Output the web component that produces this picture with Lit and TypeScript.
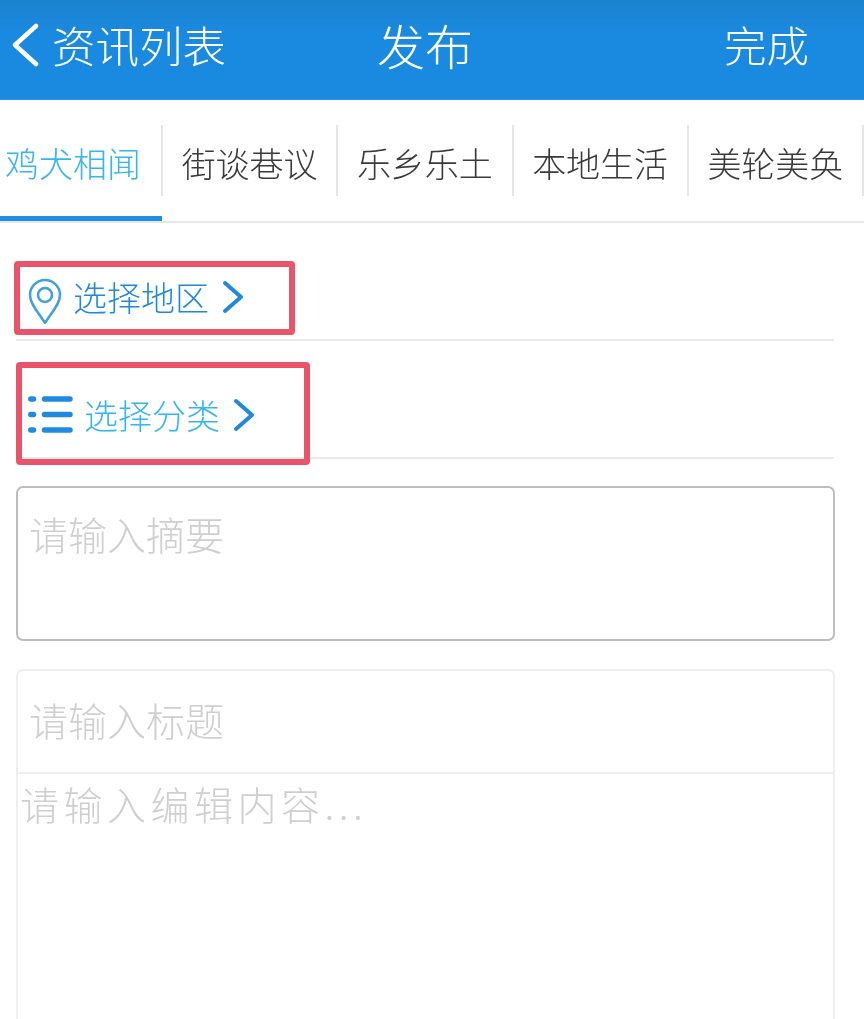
import {html, css, LitElement} from 'lit';
import {customElement} from 'lit/decorators.js';

const tabs = ['鸡犬相闻', '街谈巷议', '乐乡乐土', '本地生活', '美轮美奂'];

const chevron = html`<svg class="chev" viewBox="0 0 22 34" width="22" height="34">
	<path d="M3 3 L19 17 L3 31" fill="none" stroke="#2188dc" stroke-width="4" stroke-linecap="round" stroke-linejoin="round"/>
</svg>`;

@customElement('app-root')
export class AppRoot extends LitElement {
	static styles = css`
		*, *::before, *::after {
			box-sizing: border-box;
		}

		:host {
			display: block;
			width: 864px;
			height: 1019px;
			overflow: hidden;
			background: #fff;
			font-family: "Noto Sans CJK SC", "Liberation Sans", sans-serif;
			font-weight: 300;
			filter: blur(0.4px);
		}

		/* top bar */
		.bar {
			display: grid;
			grid-template-columns: 377px auto 1fr;
			align-items: center;
			height: 100px;
			padding-bottom: 10px;
			color: #fff;
			background: linear-gradient(#1a82cf, #1a8ae0 35%);
			border-bottom: 1px solid #2a92e2;
		}
		.back {
			display: flex;
			align-items: center;
			gap: 12px;
			padding-left: 11px;
			font-size: 43.5px;
			line-height: 1;
		}
		.back svg {
			margin-right: 1px;
		}
		.title {
			font-size: 48px;
			line-height: 1;
			padding-bottom: 2px;
		}
		.done {
			justify-self: end;
			padding-right: 55px;
			font-size: 42.5px;
			line-height: 1;
		}

		/* tabs */
		.tabs {
			display: flex;
			height: 123px;
			padding-top: 25px;
			overflow: hidden;
			border-bottom: 2px solid #e8e8e8;
			position: relative;
		}
		.tab {
			flex: 0 0 175.25px;
			height: 71px;
			padding-top: 4px;
			display: flex;
			align-items: center;
			justify-content: center;
			font-size: 34px;
			color: #3a3a3a;
			border-right: 2px solid #e6e6e6;
		}
		.tab.on {
			flex-basis: 176px;
			margin-left: -13px;
			padding-right: 2px;
			color: #35b5f2;
		}
		.tabs::after {
			content: "";
			position: absolute;
			left: 0;
			bottom: -1px;
			width: 162px;
			height: 6px;
			background: #1f8fe3;
		}

		/* pick rows */
		.row {
			display: flex;
			align-items: center;
			margin-left: 16px;
			width: 818px;
			height: 118px;
			border-bottom: 2px solid #eaeaea;
			position: relative;
			font-size: 34px;
		}
		.area {
			padding: 31px 0 0 12px;
			gap: 11px;
			color: #2188dc;
		}
		.area .pin {
			margin-top: 10px;
		}
		.cat {
			padding: 31px 0 0 12px;
			gap: 11px;
			color: #35b5f2;
		}
		.chev {
			margin-left: 2px;
		}
		.mark {
			position: absolute;
			border: 6px solid #e9546b;
			border-radius: 4px;
		}
		.area .mark {
			left: -2px;
			top: 38px;
			width: 281px;
			height: 74px;
		}
		.cat .mark {
			left: 0;
			top: 21px;
			width: 294px;
			height: 103px;
		}

		/* inputs */
		.summary {
			margin: 27px 0 0 16px;
			width: 819px;
			height: 155px;
			padding: 21px 11px;
			border: 2px solid #bdbdbd;
			border-radius: 7px;
			font-size: 39px;
			line-height: 48px;
			color: #cfcfcf;
		}
		.editor {
			margin: 28px 0 0 16px;
			width: 819px;
			height: 500px;
			border: 2px solid #efefef;
			border-radius: 7px;
			color: #cfcfcf;
			font-size: 39px;
		}
		.head {
			height: 103px;
			padding: 24px 11px 0;
			line-height: 48px;
			border-bottom: 2px solid #efefef;
		}
		.body {
			padding: 5px 2px;
			line-height: 48px;
			letter-spacing: 4.5px;
		}
	`;

	render() {
		return html`
			<div class="bar">
				<div class="back">
					<svg viewBox="0 0 28 44" width="28" height="44">
						<path d="M25 3 L4 22 L25 41" fill="none" stroke="#fff" stroke-width="4.5" stroke-linecap="round" stroke-linejoin="round"/>
					</svg>
					<span>资讯列表</span>
				</div>
				<div class="title">发布</div>
				<div class="done">完成</div>
			</div>
			<div class="tabs">
				${tabs.map((t, i) => html`<div class="tab ${i == 0 ? 'on' : ''}">${t}</div>`)}
			</div>
			<div class="row area">
				<svg class="pin" viewBox="0 0 34 48" width="34" height="48">
					<path d="M17 45 C12 36 2 27 2 17 A15 15 0 0 1 32 17 C32 27 22 36 17 45 Z" fill="none" stroke="#3f9fe4" stroke-width="2.5" stroke-linejoin="round"/>
					<circle cx="17" cy="17" r="7" fill="none" stroke="#3f9fe4" stroke-width="2.5"/>
				</svg>
				<span>选择地区</span>
				${chevron}
				<div class="mark"></div>
			</div>
			<div class="row cat">
				<svg viewBox="0 0 45 37" width="45" height="37">
					<g fill="none" stroke="#1f8ae0" stroke-width="5.5" stroke-linecap="round">
						<path d="M2.8 3 H5.5 M16.5 3 H42"/>
						<path d="M2.8 18.5 H5.5 M16.5 18.5 H42"/>
						<path d="M2.8 34 H5.5 M16.5 34 H42"/>
					</g>
				</svg>
				<span>选择分类</span>
				${chevron}
				<div class="mark"></div>
			</div>
			<div class="summary">请输入摘要</div>
			<div class="editor">
				<div class="head">请输入标题</div>
				<div class="body">请输入编辑内容...</div>
			</div>
		`;
	}
}
